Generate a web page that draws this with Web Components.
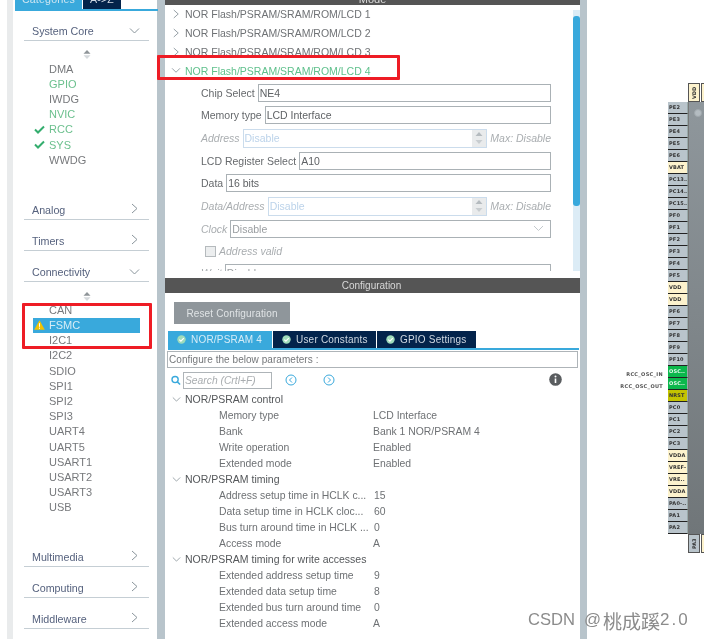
<!DOCTYPE html>
<html><head><meta charset="utf-8"><style>
html,body{margin:0;padding:0;background:#fff;overflow:hidden}
body{width:704px;height:639px;font-family:"Liberation Sans",Arial,sans-serif;}
</style></head><body>
<cube-app></cube-app>
<script>
const chevR='<svg width="9" height="11" viewBox="0 0 9 11"><path d="M2 1l5 4.500L2 10" fill="none" stroke="#8a959c" stroke-width="1"/></svg>';
const chevD='<svg width="11" height="8" viewBox="0 0 11 8"><path d="M1 1.500l4.500 4.500L10 1.500" fill="none" stroke="#8a959c" stroke-width="1"/></svg>';
class CatHead extends HTMLElement{
  connectedCallback(){
    const s=this.attachShadow({mode:'open'});
    const open=this.hasAttribute('open');
    s.innerHTML=`<style>:host{display:flex;justify-content:space-between;align-items:flex-end;box-sizing:border-box;height:26px;width:125px;margin-left:24px;border-bottom:1px solid #c5ced4;color:#56627e;font-size:10.7px;padding:0 9px 3px 8px}
    .i{display:flex;width:11px;justify-content:center;margin-bottom:2px}</style><span><slot></slot></span><span class="i">${open?chevD:chevR}</span>`;
  }
}
customElements.define('cat-head',CatHead);
class IpItem extends HTMLElement{
  connectedCallback(){
    const s=this.attachShadow({mode:'open'});
    let icon='';
    if(this.hasAttribute('check'))icon='<svg width="11" height="9" viewBox="0 0 11 9"><path d="M1 4.500l3 3L10 1.500" fill="none" stroke="#34ad6e" stroke-width="2"/></svg>';
    if(this.hasAttribute('warn'))icon='<svg width="11" height="10" viewBox="0 0 11 10"><path d="M5.500 .3L10.800 9.700H.2z" fill="#f2c200"/><path d="M5.500 3.200v3.600M5.500 7.600v1.200" stroke="#fff" stroke-width="1"/></svg>';
    s.innerHTML=`<style>:host{display:flex;align-items:center;height:15.2px;width:107px;margin-left:33px;box-sizing:border-box;font-size:11px;color:#77797c;padding-left:1px}
    :host([state=ok]){color:#6cc08e}:host([selected]){background:#39a9dc;color:#d6ecf6}
    .ic{width:15px;display:flex;align-items:center;justify-content:flex-start}</style><span class="ic">${icon}</span><span><slot></slot></span>`;
  }
}
customElements.define('ip-item',IpItem);
class UpDown extends HTMLElement{
  connectedCallback(){
    this.attachShadow({mode:'open'}).innerHTML=`<style>:host{display:flex;height:10px;margin-left:33px;width:107px;justify-content:center;box-sizing:border-box}</style>
    <svg width="8" height="9" viewBox="0 0 8 9"><path d="M4 0L7.500 3.800H.5z" fill="#8f9599"/><path d="M4 9L7.500 5.200H.5z" fill="#d5d9dc"/></svg>`;
  }
}
customElements.define('up-down',UpDown);
class SidePanel extends HTMLElement{
  connectedCallback(){
    const L=a=>a.map(n=>{const c=n.split('|');return `<ip-item ${c[1]==='ok'||c[1]==='chk'?'state="ok"':''} ${c[1]==='chk'?'check':''} ${c[1]==='sel'?'selected warn':''}>${c[0]}</ip-item>`}).join('');
    this.attachShadow({mode:'open'}).innerHTML=`<style>:host{display:block;box-sizing:border-box;width:165px;height:639px;background:linear-gradient(90deg,#fff 0,#fff 7px,#e9ebec 7px,#e9ebec 13px,#fff 13px,#fff 157px,#b8c4cb 157px);overflow:hidden}
    .tabs{display:flex;height:9px;margin-left:15px;border-bottom:2px solid #39a9dc;width:143px;align-items:flex-end;overflow:hidden}
    .t{height:15px;font-size:10.6px;line-height:11px;letter-spacing:.2px;display:flex;justify-content:center;align-items:flex-start;margin-top:-6px}
    .a{width:67px;background:#39a9dc;color:#cfe6f2}.b{width:38px;background:#03234b;color:#d0d8e2;margin-left:1px}</style>
    <div class="tabs"><div class="t a">Categories</div><div class="t b">A-&gt;Z</div></div>
    <div style="height:4px"></div>
    <cat-head open>System Core</cat-head>
    <div style="height:9px"></div><up-down></up-down>
    <div style="height:1px"></div>
    ${L(['DMA','GPIO|ok','IWDG','NVIC|ok','RCC|chk','SYS|chk','WWDG'])}
    <div style="height:27px"></div>
    <cat-head>Analog</cat-head><div style="height:5px"></div>
    <cat-head>Timers</cat-head><div style="height:5px"></div>
    <cat-head open>Connectivity</cat-head>
    <div style="height:10px"></div><up-down></up-down>
    ${L(['CAN','FSMC|sel','I2C1','I2C2','SDIO','SPI1','SPI2','SPI3','UART4','UART5','USART1','USART2','USART3','USB'])}
    <div style="height:26px"></div>
    <cat-head>Multimedia</cat-head><div style="height:5px"></div>
    <cat-head>Computing</cat-head><div style="height:5px"></div>
    <cat-head>Middleware</cat-head>`;
  }
}
customElements.define('side-panel',SidePanel);
class ModeRow extends HTMLElement{
  connectedCallback(){
    const open=this.hasAttribute('open');
    this.attachShadow({mode:'open'}).innerHTML=`<style>:host{display:flex;align-items:center;height:19px;font-size:10.5px;color:#6f7275;padding-left:3px}
    :host([open]){color:#5fc08c}.i{width:17px;display:flex;justify-content:center;padding-right:2px;box-sizing:border-box}</style><span class="i">${open?chevD.replace('width="11"','width="10"').replace('height="8"','height="7"'):chevR.replace('width="9"','width="8"').replace('height="11"','height="10"')}</span><span><slot></slot></span>`;
  }
}
customElements.define('mode-row',ModeRow);
class FieldRow extends HTMLElement{
  connectedCallback(){
    const lab=this.getAttribute('label'),v=this.getAttribute('value'),kind=this.getAttribute('kind')||'';
    const inner=`<div class="box ${kind}"><span class="v">${v}</span>${kind==='sel'?`<svg style="margin-right:6px" width="11" height="7" viewBox="0 0 11 7"><path d="M1 1l4.500 4.500L10 1" fill="none" stroke="#c3c9cd"/></svg>`:''}${kind==='spin'?`<span class="arrows"><svg width="8" height="12" viewBox="0 0 8 12"><path d="M4 0l3.500 4H.5z" fill="#b5bbbf"/><path d="M4 12l3.500-4H.5z" fill="#c8cdd0"/></svg></span>`:''}</div>${kind==='spin'?'<span class="max">Max: Disable</span>':''}`;
    this.attachShadow({mode:'open'}).innerHTML=`<style>:host{display:flex;align-items:center;box-sizing:border-box;height:22.67px;padding-left:36px;width:386px;font-size:10.5px;color:#66696c;flex:none}
    :host([kind=spin]) .l,:host([kind=sel]) .l{color:#a9adb0;font-style:italic}
    .l{white-space:nowrap;margin-right:3px}
    .box{flex:1;display:flex;align-items:center;justify-content:space-between;height:18px;box-sizing:border-box;border:1px solid #aab1b5;padding-left:1px;color:#5f6265;min-width:0;background:#fff}
    .sel{color:#9a9ea1}
    .arrows{width:14px;height:17px;background:#e9ebec;display:flex;align-items:center;justify-content:center}
    .box.spin{border-color:#cbdcec;color:#bcd3ea;height:19px}
    .max{margin-left:3px;color:#a9adb0;font-style:italic;white-space:nowrap}</style><span class="l">${lab}</span>${inner}`;
  }
}
customElements.define('field-row',FieldRow);
class ModePanel extends HTMLElement{
  connectedCallback(){
    this.attachShadow({mode:'open'}).innerHTML=`<style>:host{display:block;position:relative;height:271px;overflow:hidden;background:#fff}
    .h{height:5px;background:#555;overflow:hidden;color:#ddd;font-size:11px;text-align:center;line-height:0}
    .sb{position:absolute;right:0;top:10px;width:7px;height:261px;background:#dcecf6}
    .th{position:absolute;left:0;top:6px;width:7px;background:#39a9dc;border-radius:3px;height:190px}
    .cb{display:flex;align-items:center;height:22px;padding-left:40px;font-size:10.5px;font-style:italic;color:#a9adb0}
    .cb i{width:9px;height:9px;border:1px solid #b5babd;background:#eceeef;margin-right:3px;display:block}
    .first{margin-top:-1px}</style>
    <div class="h"><span style="position:relative;top:-1px">Mode</span></div>
    <mode-row class="first">NOR Flash/PSRAM/SRAM/ROM/LCD 1</mode-row>
    <mode-row>NOR Flash/PSRAM/SRAM/ROM/LCD 2</mode-row>
    <mode-row>NOR Flash/PSRAM/SRAM/ROM/LCD 3</mode-row>
    <mode-row open>NOR Flash/PSRAM/SRAM/ROM/LCD 4</mode-row>
    <div style="height:1.500px"></div>
    <field-row label="Chip Select" value="NE4"></field-row>
    <field-row label="Memory type" value="LCD Interface"></field-row>
    <field-row label="Address" value="Disable" kind="spin"></field-row>
    <field-row label="LCD Register Select" value="A10"></field-row>
    <field-row label="Data" value="16 bits"></field-row>
    <field-row label="Data/Address" value="Disable" kind="spin"></field-row>
    <field-row label="Clock" value="Disable" kind="sel"></field-row>
    <div class="cb"><i></i>Address valid</div>
    <field-row label="Wait" value="Disable" kind="sel"></field-row>
    <div class="sb"><div class="th"></div></div>`;
  }
}
customElements.define('mode-panel',ModePanel);
class CfgTab extends HTMLElement{
  connectedCallback(){
    this.attachShadow({mode:'open'}).innerHTML=`<style>:host{display:flex;align-items:center;height:17px;box-sizing:border-box;background:#03234b;color:#cfd8e2;font-size:10px;letter-spacing:.2px;padding:0 0 0 9px;gap:5px;white-space:nowrap}
    :host([active]){background:#39a9dc;color:#d5ecf7}</style>
    <svg width="9" height="9" viewBox="0 0 9 9"><circle cx="4.500" cy="4.500" r="4.200" fill="#9fdcbb"/><path d="M2.300 4.600l1.600 1.600 2.900-3" fill="none" stroke="#fff" stroke-width="1.200"/></svg><span><slot></slot></span>`;
  }
}
customElements.define('cfg-tab',CfgTab);
class TreeRow extends HTMLElement{
  connectedCallback(){
    const g=this.hasAttribute('group');
    const v=this.getAttribute('value')||'';
    this.attachShadow({mode:'open'}).innerHTML=`<style>:host{display:flex;align-items:center;height:16px;font-size:10.4px;color:#6e7174;white-space:nowrap}
    :host([group]){color:#54575a;padding-left:7px;font-size:10.5px}
    :host(:not([group])){padding-left:54px}
    .i{width:13px;display:flex}
    .n{width:154px;overflow:hidden}
    .pad{padding-left:1px}</style>
    ${g?`<span class="i">${chevD.replace('width="11"','width="9"').replace('height="8"','height="7"')}</span><span><slot></slot></span>`:`<span class="n"><slot></slot></span><span class="${this.hasAttribute('num')?'pad':''}">${v}</span>`}`;
  }
}
customElements.define('tree-row',TreeRow);
class ConfigPanel extends HTMLElement{
  connectedCallback(){
    const R=(n,v)=>`<tree-row value="${v}" ${/^\d/.test(v)&&v.length<3?'num':''}>${n}</tree-row>`;
    this.attachShadow({mode:'open'}).innerHTML=`<style>:host{display:block;height:361px;overflow:hidden;background:#fff;position:relative}
    .h{height:15px;background:#555;color:#d8d8d8;font-size:10px;text-align:center;line-height:15px;padding-right:2px}
    .btn{margin:9px 0 0 9px;width:116px;height:22px;background:#8f969b;color:#dfe3e5;font-size:10px;letter-spacing:.15px;display:flex;align-items:center;justify-content:center}
    .tabs{display:flex;gap:1px;margin:7px 0 0 3px;border-bottom:2px solid #39a9dc;width:411px}
    .cfg{box-sizing:border-box;margin:1px 0 0 2px;width:411px;height:17px;border:1px solid #aeb4b8;font-size:10px;letter-spacing:.05px;color:#74777a;display:flex;align-items:center;padding-left:1px}
    .sr{display:flex;align-items:center;height:22px;padding-left:6px;position:relative;margin-top:1px}
    .inp{width:89px;height:17px;box-sizing:border-box;border:1px solid #aeb4b8;margin-left:2px;font-size:10.3px;font-style:italic;color:#a9adb0;display:flex;align-items:center;padding-left:1px}
    .nav{position:absolute;top:5px}
    .info{position:absolute;left:384px;top:4px}</style>
    <div class="h">Configuration</div>
    <div class="btn">Reset Configuration</div>
    <div class="tabs"><cfg-tab active style="width:104px">NOR/PSRAM 4</cfg-tab><cfg-tab style="width:103px">User Constants</cfg-tab><cfg-tab style="width:99px">GPIO Settings</cfg-tab></div>
    <div class="cfg">Configure the below parameters :</div>
    <div class="sr"><svg width="10" height="11" viewBox="0 0 11 11"><circle cx="4.500" cy="4.500" r="3.400" fill="none" stroke="#39a9dc" stroke-width="1.500"/><path d="M7 7l3 3" stroke="#39a9dc" stroke-width="1.600"/></svg><div class="inp">Search (Crtl+F)</div>
      <svg class="nav" style="left:120px" width="12" height="12" viewBox="0 0 12 12"><circle cx="6" cy="6" r="5" fill="none" stroke="#39a9dc"/><path d="M7 3.500L4.500 6 7 8.500" fill="none" stroke="#39a9dc"/></svg>
      <svg class="nav" style="left:158px" width="12" height="12" viewBox="0 0 12 12"><circle cx="6" cy="6" r="5" fill="none" stroke="#39a9dc"/><path d="M5 3.500L7.500 6 5 8.500" fill="none" stroke="#39a9dc"/></svg>
      <svg class="info" width="13" height="13" viewBox="0 0 13 13"><circle cx="6.500" cy="6.500" r="6.300" fill="#5a5d60"/><path d="M6.500 5.500v4.500" stroke="#fff" stroke-width="1.600"/><circle cx="6.500" cy="3.500" r="1" fill="#fff"/></svg></div>
    <tree-row group>NOR/PSRAM control</tree-row>
    ${R('Memory type','LCD Interface')}${R('Bank','Bank 1 NOR/PSRAM 4')}${R('Write operation','Enabled')}${R('Extended mode','Enabled')}
    <tree-row group>NOR/PSRAM timing</tree-row>
    ${R('Address setup time in HCLK c...','15')}${R('Data setup time in HCLK cloc...','60')}${R('Bus turn around time in HCLK ...','0')}${R('Access mode','A')}
    <tree-row group>NOR/PSRAM timing for write accesses</tree-row>
    ${R('Extended address setup time','9')}${R('Extended data setup time','8')}${R('Extended bus turn around time','0')}${R('Extended access mode','A')}`;
  }
}
customElements.define('config-panel',ConfigPanel);
class ChipPin extends HTMLElement{
  connectedCallback(){
    this.attachShadow({mode:'open'}).innerHTML=`<style>:host{display:block;box-sizing:border-box;height:12px;width:20px;background:#b9c4cb;border-bottom:1px solid #222;border-right:1px solid #9aa;font:bold 5px/11px "DejaVu Sans",sans-serif;letter-spacing:.15px;color:#333;padding-left:1px;white-space:nowrap;overflow:hidden}
    :host([t=p]){background:#fdf3cd}:host([t=g]){background:#0cb84c;color:#e6f7ec}:host([t=y]){background:#c3c300;color:#333}</style><slot></slot>`;
  }
}
customElements.define('chip-pin',ChipPin);
class ChipView extends HTMLElement{
  connectedCallback(){
    const pins='PE2 PE3 PE4 PE5 PE6 VBAT:p PC13.. PC14.. PC15.. PF0 PF1 PF2 PF3 PF4 PF5 VDD:p VDD:p PF6 PF7 PF8 PF9 PF10 OSC..:g OSC..:g NRST:y PC0 PC1 PC2 PC3 VDDA:p VREF-:p VRE..:p VDDA:p PA0-.. PA1 PA2'.split(' ');
    const html=pins.map(p=>{const[a,b]=p.split(':');return `<chip-pin ${b?`t="${b}"`:''}>${a}</chip-pin>`}).join('');
    this.attachShadow({mode:'open'}).innerHTML=`<style>:host{display:block;position:relative;width:117px;height:639px;background:#fff;overflow:hidden}
    .c{position:absolute;left:81px;top:102px;display:flex}
    .body{width:36px;height:432px;background:linear-gradient(#8f979c,#707679);position:relative;border-left:1px solid #777}
    .dot{position:absolute;left:5px;top:7px;width:6px;height:6px;border-radius:50%;background:#b4bcc1;border:1px solid #a0a8ad}
    .vt{position:absolute;width:12px;height:19px;font:bold 5px/10px "DejaVu Sans",sans-serif;writing-mode:vertical-rl;transform:rotate(180deg);text-align:center;box-sizing:border-box;border:1px solid #555;color:#333}
    .sig{position:absolute;font:bold 5px/8px "DejaVu Sans",sans-serif;color:#555;letter-spacing:.3px;white-space:nowrap;right:41px}</style>
    <div class="vt" style="left:101px;top:83px;background:#fdf3cd">VDD</div>
    <div class="vt" style="left:114px;top:83px;background:#fdf3cd"></div>
    <div class="vt" style="left:101px;top:534px;background:#b9c4cb">PA3</div>
    <div class="vt" style="left:114px;top:534px;background:#fdf3cd"></div>
    <span class="sig" style="top:370px">RCC_OSC_IN</span><span class="sig" style="top:382px">RCC_OSC_OUT</span>
    <div class="c"><div>${html}</div><div class="body"><div class="dot"></div></div></div>`;
  }
}
customElements.define('chip-view',ChipView);
class CubeApp extends HTMLElement{
  connectedCallback(){
    this.attachShadow({mode:'open'}).innerHTML=`<style>:host{display:flex;width:704px;height:639px;position:relative;overflow:hidden;background:#fff;filter:blur(.3px)}
    .mid{width:415px;height:639px;display:flex;flex-direction:column;gap:7px}
    .div{width:7px;background:#b8c4cb}
    .mark{position:absolute;border:3px solid #ee1c25;box-sizing:border-box;border-radius:1px}
    .wm{position:absolute;left:528px;top:608px;height:24px;display:flex;align-items:center;font-family:"Liberation Sans","Noto Sans CJK SC",sans-serif;color:#8b8b8b;white-space:nowrap}
    .wm span{display:block}</style>
    <side-panel></side-panel>
    <div class="mid"><mode-panel></mode-panel><config-panel></config-panel></div>
    <div class="div"></div>
    <chip-view></chip-view>
    <div class="mark" style="left:157px;top:55px;width:243px;height:25px"></div>
    <div class="mark" style="left:22px;top:303px;width:130px;height:46px"></div>
    <div class="wm"><span style="font-size:16.600px;margin-right:9px">CSDN</span><span style="font-size:16.800px;margin-right:2px">@</span><span style="font-size:19px">桃成蹊</span><span style="font-size:17px;letter-spacing:2px">2.0</span></div>`;
  }
}
customElements.define('cube-app',CubeApp);
</script></body></html>
